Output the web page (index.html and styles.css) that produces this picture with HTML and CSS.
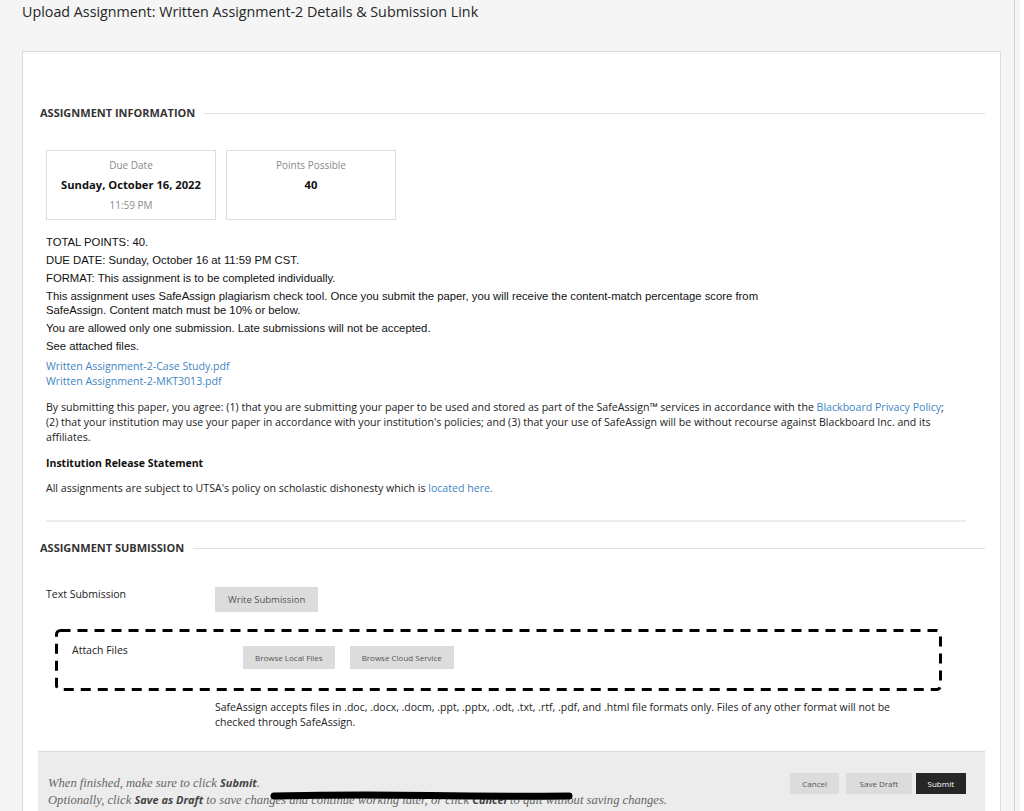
FILE: index.html
```html
<!DOCTYPE html>
<html lang="en">
<head>
<meta charset="utf-8">
<title>Upload Assignment</title>
<link rel="stylesheet" href="styles.css">
</head>
<body>
<header class="page-title">
  <h1>Upload Assignment: Written Assignment-2 Details &amp; Submission Link</h1>
</header>

<main class="panel">
  <section class="block">
    <h2 class="section-head"><span>ASSIGNMENT INFORMATION</span></h2>

    <div class="inset">
      <div class="meta-cards">
        <div class="meta-card">
          <div class="meta-label">Due Date</div>
          <div class="meta-value">Sunday, October 16, 2022</div>
          <div class="meta-label">11:59 PM</div>
        </div>
        <div class="meta-card">
          <div class="meta-label">Points Possible</div>
          <div class="meta-value">40</div>
        </div>
      </div>

      <div class="instructions">
        <p>TOTAL POINTS: 40.</p>
        <p>DUE DATE: Sunday, October 16 at 11:59 PM CST.</p>
        <p>FORMAT: This assignment is to be completed individually.</p>
        <p>This assignment uses SafeAssign plagiarism check tool. Once you submit the paper, you will receive the content-match percentage score from<br>SafeAssign. Content match must be 10% or below.</p>
        <p>You are allowed only one submission. Late submissions will not be accepted.</p>
        <p>See attached files.</p>
      </div>

      <ul class="files">
        <li><a href="#">Written Assignment-2-Case Study.pdf</a></li>
        <li><a href="#">Written Assignment-2-MKT3013.pdf</a></li>
      </ul>

      <p class="agreement">By submitting this paper, you agree: (1) that you are submitting your paper to be used and stored as part of the SafeAssign™ services in accordance with the <a href="#">Blackboard Privacy Policy</a>; (2) that your institution may use your paper in accordance with your institution's policies; and (3) that your use of SafeAssign will be without recourse against Blackboard Inc. and its affiliates.</p>

      <h3 class="release-title">Institution Release Statement</h3>
      <p class="release">All assignments are subject to UTSA's policy on scholastic dishonesty which is <a href="#">located here.</a></p>

      <hr class="divider">
    </div>
  </section>

  <section class="block">
    <h2 class="section-head"><span>ASSIGNMENT SUBMISSION</span></h2>

    <div class="inset">
      <div class="field-row">
        <div class="field-label">Text Submission</div>
        <button class="btn btn-lg" type="button">Write Submission</button>
      </div>

      <div class="attach-box">
        <svg class="dash-frame" aria-hidden="true">
          <rect x="1.5" y="1.5" rx="4" ry="4"/>
        </svg>
        <div class="field-label">Attach Files</div>
        <div class="btn-group">
          <button class="btn btn-sm" type="button">Browse Local Files</button>
          <button class="btn btn-sm" type="button">Browse Cloud Service</button>
        </div>
      </div>

      <p class="formats">SafeAssign accepts files in .doc, .docx, .docm, .ppt, .pptx, .odt, .txt, .rtf, .pdf, and .html file formats only. Files of any other format will not be checked through SafeAssign.</p>
    </div>
  </section>

  <footer class="submit-bar">
    <div class="submit-help">
      <p>When finished, make sure to click <b>Submit</b>.</p>
      <p>Optionally, click <b>Save as Draft</b> to save changes and continue working later, or click <b>Cancel</b> to quit without saving changes.</p>
      <svg class="scribble" width="304" height="12" viewBox="0 0 304 12" aria-hidden="true">
        <path d="M4 6 C50 5 100 4.5 160 5.5 S250 6.5 299 6" stroke="#000" stroke-width="7" stroke-linecap="round" fill="none"/>
      </svg>
    </div>
    <div class="submit-actions">
      <button class="btn btn-xs" type="button">Cancel</button>
      <button class="btn btn-xs btn-wide" type="button">Save Draft</button>
      <button class="btn btn-xs btn-dark" type="button">Submit</button>
    </div>
  </footer>
</main>
</body>
</html>
```

FILE: styles.css
```css
html, body {
  margin: 0;
  padding: 0;
}

body {
  background: #f5f5f5;
  font-family: "Open Sans", "Liberation Sans", sans-serif;
  color: #333;
  height: 811px;
  overflow: hidden;
  border-right: 4px solid #fff;
  box-shadow: inset -5px 0 0 #f5f5f5, inset -6px 0 0 #cfcfcf;
}

a {
  color: #4186c3;
  text-decoration: none;
}

p {
  margin: 0;
}

/* page heading */
.page-title {
  padding: 0 22px;
}

.page-title h1 {
  margin: 0;
  font-size: 14.3px;
  font-weight: 400;
  line-height: 24px;
  color: #262626;
}

/* main white panel */
.panel {
  margin: 27px 19px 0 22px;
  background: #fff;
  border: 1px solid #dcdcdc;
  padding: 53px 15px 0 15px;
}

.block {
  padding-left: 2px;
}

.section-head {
  display: flex;
  align-items: center;
  gap: 9px;
  margin: 0;
  font-size: 11px;
  font-weight: 700;
  line-height: 16px;
  color: #333;
}

.section-head::after {
  content: "";
  flex: 1;
  height: 1px;
  background: #e2e2e2;
}

.inset {
  padding-left: 6px;
}

/* due date / points cards */
.meta-cards {
  display: flex;
  gap: 10px;
  margin-top: 29px;
}

.meta-card {
  width: 168px;
  border: 1px solid #dedede;
  padding: 4px 0;
  text-align: center;
}

.meta-label {
  font-size: 10px;
  line-height: 20px;
  color: #8a8a8a;
}

.meta-value {
  font-size: 11.2px;
  font-weight: 700;
  line-height: 20px;
  color: #111;
}

/* instructor text */
.instructions {
  margin-top: 15px;
  font-family: "Liberation Sans", Arial, sans-serif;
  font-size: 11.3px;
  line-height: 14px;
  color: #111;
}

.instructions p + p {
  margin-top: 4px;
}

.files {
  list-style: none;
  margin: 6px 0 0;
  padding: 0;
  font-size: 10.6px;
  line-height: 15px;
}

.agreement {
  width: 900px;
  margin-top: 11px;
  font-size: 10.6px;
  line-height: 15px;
  color: #222;
}

.release-title {
  margin: 11px 0 0;
  font-size: 10.5px;
  font-weight: 700;
  line-height: 15px;
  color: #111;
}

.release {
  margin-top: 10px;
  font-size: 10.6px;
  line-height: 15px;
  color: #222;
}

.divider {
  margin: 24px 19px 18px 0;
  border: 0;
  height: 2px;
  background: #ececec;
}

/* submission fields */
.field-row {
  display: flex;
  align-items: flex-start;
  margin-top: 30px;
}

.field-label {
  width: 169px;
  flex: none;
  font-size: 10.5px;
  line-height: 16px;
  color: #222;
}

.btn {
  border: 0;
  border-radius: 0;
  background: #dcdcdc;
  color: #555;
  font-family: "Open Sans", "Liberation Sans", sans-serif;
  padding: 0;
  cursor: pointer;
}

.btn-lg {
  height: 25px;
  padding: 0 13px;
  font-size: 9.5px;
  margin-top: 1px;
}

.btn-sm {
  height: 23px;
  padding: 0 12px;
  font-size: 8px;
}

.btn-xs {
  height: 21px;
  padding: 0 12px;
  font-size: 8px;
}

.btn-wide {
  padding: 0 13.5px;
}

.btn-dark {
  background: #262626;
  color: #fff;
}

/* dashed drop area */
.attach-box {
  position: relative;
  display: flex;
  align-items: flex-start;
  margin: 17px 43px 0 9px;
  padding: 14px 17px 0 17px;
  height: 48px;
}

.dash-frame {
  position: absolute;
  inset: 0;
  width: 100%;
  height: 100%;
  overflow: visible;
}

.dash-frame rect {
  width: calc(100% - 3px);
  height: calc(100% - 3px);
  fill: none;
  stroke: #000;
  stroke-width: 3;
  stroke-dasharray: 10 7;
}

.attach-box .field-label {
  width: 171px;
  line-height: 15px;
}

.btn-group {
  position: relative;
  display: flex;
  gap: 15px;
  margin-top: 3px;
}

.formats {
  margin: 9px 0 0 169px;
  width: 690px;
  font-size: 10.5px;
  line-height: 15px;
  color: #222;
}

/* bottom submit bar */
.submit-bar {
  display: flex;
  align-items: flex-start;
  justify-content: space-between;
  margin: 21px 0 0 0;
  padding: 23px 19px 10px 10px;
  background: #ececec;
  border-top: 1px solid #dcdcdc;
  box-shadow: 0 -1px 2px rgba(0, 0, 0, 0.04);
}

.submit-help {
  position: relative;
  font-family: "Liberation Serif", Georgia, serif;
  font-style: italic;
  font-size: 12.6px;
  line-height: 17px;
  color: #666;
}

.submit-help p {
  height: 17px;
}

.submit-help b {
  font-family: "Open Sans", sans-serif;
  font-size: 11px;
  line-height: 1;
  font-style: italic;
  font-weight: 700;
  color: #444;
}

.scribble {
  position: absolute;
  left: 222px;
  top: 15px;
}

.submit-actions {
  display: flex;
  gap: 7px;
  margin-top: -2px;
}

.submit-actions .btn-dark {
  margin-left: -3px;
}
```
